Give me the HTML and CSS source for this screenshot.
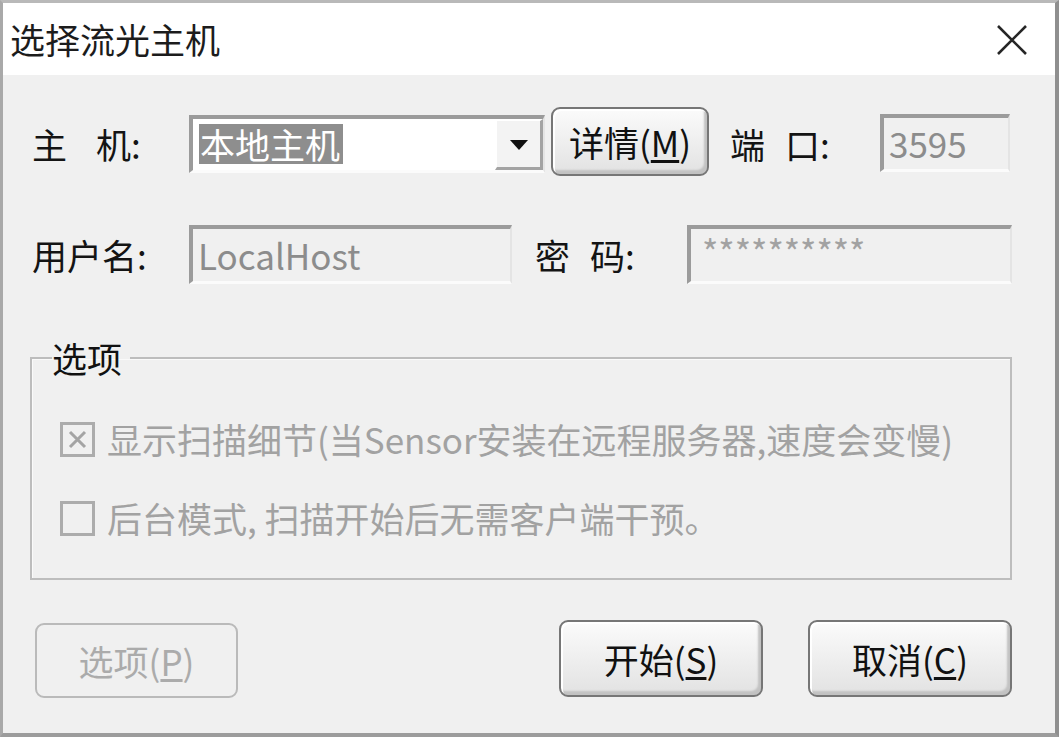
FILE: index.html
```html
<!DOCTYPE html>
<html>
    <head>
        <meta charset="utf-8">
        <meta name="viewport" content="width=device-width, initial-scale=1">
        <link rel="stylesheet" href="styles.css">
    </head>
    <body>
        <div class="window">
            <!-- Title bar -->
            <div class="titlebar">
                <span class="title">选择流光主机</span>
                <svg class="close" width="32" height="32" viewBox="0 0 32 32">
                    <path d="M2 2 L30 30 M30 2 L2 30" stroke="#262626" stroke-width="2.6" fill="none"/>
                </svg>
            </div>

            <div class="content">
                <!-- Host row -->
                <div class="row row-host">
                    <span class="lbl lbl-host">主<span class="sp-wide"></span>机:</span>
                    <div class="combo">
                        <div class="combo-text"><span class="sel">本地主机</span></div>
                        <div class="combo-btn">
                            <svg width="18" height="10" viewBox="0 0 18 10"><polygon points="0,0 18,0 9,10" fill="#111"/></svg>
                        </div>
                    </div>
                    <button class="btn btn-detail">详情(<u>M</u>)</button>
                    <span class="lbl lbl-port">端<span class="sp"></span>口:</span>
                    <div class="field field-port">3595</div>
                </div>

                <!-- User row -->
                <div class="row row-user">
                    <span class="lbl lbl-user">用户名:</span>
                    <div class="field field-user">LocalHost</div>
                    <span class="lbl lbl-pass">密<span class="sp"></span>码:</span>
                    <div class="field field-pass">**********</div>
                </div>

                <!-- Options group -->
                <fieldset class="group">
                    <legend>选项</legend>
                    <div class="check">
                        <span class="box">
                            <svg width="29" height="29" viewBox="0 0 29 29"><path d="M7 7 L22 22 M22 7 L7 22" stroke="#a4a4a4" stroke-width="3" fill="none"/></svg>
                        </span>
                        <span class="check-text">显示扫描细节(当Sensor安装在远程服务器,速度会变慢)</span>
                    </div>
                    <div class="check">
                        <span class="box"></span>
                        <span class="check-text">后台模式, 扫描开始后无需客户端干预。</span>
                    </div>
                </fieldset>

                <!-- Buttons -->
                <div class="actions">
                    <button class="btn btn-options" disabled>选项(<u>P</u>)</button>
                    <div class="actions-right">
                        <button class="btn btn-main">开始(<u>S</u>)</button>
                        <button class="btn btn-main">取消(<u>C</u>)</button>
                    </div>
                </div>
            </div>
        </div>
    </body>
</html>
```

FILE: styles.css
```css
/* Page */
body {
    margin: 0;
    background-color: #ffffff;
}
html * {
    -webkit-text-size-adjust: none;
}

/* Dialog frame */
.window {
    width: 1059px;
    height: 737px;
    box-sizing: border-box;
    border-left: 3px solid #a9a9a9;
    border-top: 3px solid #b9b9b9;
    border-right: 4px solid #8f8f8f;
    border-bottom: 4px solid #9c9c9c;
    background-color: #f0f0f0;
    font-family: "Noto Sans CJK SC", "Noto Sans", sans-serif;
    font-size: 35px;
    color: #141414;
}

/* Title bar */
.titlebar {
    height: 72px;
    background-color: #ffffff;
    display: flex;
    align-items: center;
    justify-content: space-between;
    padding: 0 27px 0 7px;
}
.title {
    color: #1c1c1c;
    line-height: 40px;
}
.close {
    display: block;
    margin-top: 2px;
}

/* Content */
.content {
    padding: 0 43px 0 27px;
}
.row {
    display: flex;
    align-items: center;
    padding-left: 2px;
}
.row-host {
    margin-top: 32px;
    height: 69px;
}
.row-user {
    margin-top: 49px;
    height: 59px;
}
.lbl {
    display: flex;
    align-items: center;
    line-height: 40px;
    white-space: nowrap;
}
.sp-wide {
    display: inline-block;
    width: 29px;
}
.sp {
    display: inline-block;
    width: 20px;
}
.lbl-host {
    width: 157px;
    padding-top: 4px;
}
.lbl-port {
    width: 150px;
    margin-left: 21px;
    padding-top: 4px;
}
.lbl-user {
    width: 157px;
}
.lbl-pass {
    width: 152px;
    margin-left: 23px;
}

/* Sunken edit fields */
.field, .combo {
    box-sizing: border-box;
    border-top: 4px solid #9b9b9b;
    border-left: 4px solid #9b9b9b;
    border-right: 2px solid #e4e4e4;
    border-bottom: 3px solid #fbfbfb;
}
.field {
    background-color: #f0f0f0;
    color: #8c8c8c;
    padding-left: 5px;
    display: flex;
    align-items: center;
    line-height: 40px;
}
.field-port {
    width: 130px;
    height: 58px;
    margin-top: 2px;
}
.field-user {
    width: 323px;
    height: 59px;
}
.field-pass {
    width: 325px;
    height: 59px;
    color: #a2a2a2;
    align-items: flex-start;
    padding-left: 11px;
    padding-top: 2px;
}

/* Combo box */
.combo {
    width: 356px;
    height: 58px;
    margin-top: 4px;
    background-color: #ffffff;
    display: flex;
}
.combo-text {
    flex: 1;
    display: flex;
    align-items: center;
    padding-left: 6px;
}
.sel {
    background-color: #8e8e8e;
    color: #ffffff;
    line-height: 40px;
    padding: 0 3px 0 1px;
}
.combo-btn {
    width: 48px;
    box-sizing: border-box;
    background-color: #f3f3f3;
    border-top: 2px solid #ffffff;
    border-left: 2px solid #ffffff;
    border-right: 3px solid #a3a3a3;
    border-bottom: 3px solid #a3a3a3;
    display: flex;
    align-items: center;
    justify-content: center;
}
.combo-btn svg {
    display: block;
    margin-top: 2px;
}

/* Push buttons */
.btn {
    box-sizing: border-box;
    font-family: inherit;
    font-size: 35px;
    color: #111111;
    line-height: 40px;
    padding: 0;
    border: 2px solid #767676;
    border-radius: 9px;
    background: linear-gradient(#fbfbfb, #ececec 60%, #e2e2e2);
    box-shadow: inset 2px 2px 0 #ffffff, inset -3px -4px 2px #c2c2c2;
    cursor: pointer;
}
.btn u {
    text-underline-offset: 3px;
}
.btn-detail {
    width: 158px;
    height: 69px;
    margin-left: 6px;
}
.btn:disabled {
    border-color: #bababa;
    background: #f0f0f0;
    box-shadow: none;
    color: #ababab;
    cursor: default;
}

/* Group box */
.group {
    margin: 57px 0 0 0;
    padding: 44px 0 40px 20px;
    border: 2px solid #bdbdbd;
    box-shadow: inset 1px 1px 0 #fafafa;
}
.group legend {
    padding: 0 8px 0 0;
    line-height: 34px;
    color: #111111;
}
.check {
    display: flex;
    align-items: center;
    gap: 12px;
    height: 40px;
    padding-left: 8px;
    color: #a2a2a2;
}
.check + .check {
    margin-top: 39px;
}
.box {
    width: 35px;
    height: 35px;
    box-sizing: border-box;
    border: 3px solid #acacac;
    background-color: #f0f0f0;
    display: flex;
    align-items: center;
    justify-content: center;
}
.box svg {
    display: block;
}
.check-text {
    line-height: 40px;
    white-space: nowrap;
}

/* Bottom buttons */
.actions {
    margin-top: 40px;
    display: flex;
    justify-content: space-between;
    align-items: flex-start;
}
.btn-options {
    width: 203px;
    height: 75px;
    margin: 3px 0 0 5px;
}
.actions-right {
    display: flex;
    gap: 45px;
}
.btn-main {
    width: 204px;
    height: 77px;
}
```
